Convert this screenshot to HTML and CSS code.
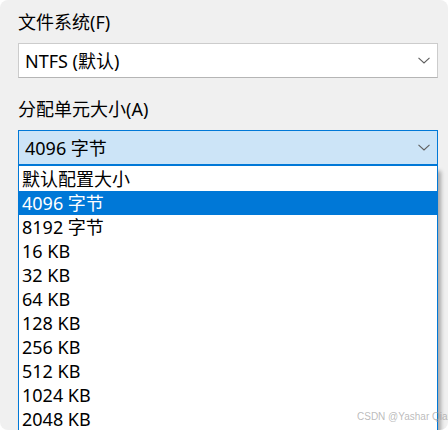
FILE: index.html
```html
<!DOCTYPE html>
<html lang="zh-CN">
<head>
<meta charset="utf-8">
<link rel="stylesheet" href="styles.css">
</head>
<body>
<div class="panel">
  <div class="label">文件系统(F)</div>
  <div class="combo">
    <span class="value">NTFS (默认)</span>
    <svg class="chev" width="12" height="7" viewBox="0 0 12 7"><polyline points="0.5,0.8 6,6 11.5,0.8" fill="none" stroke="#5f5f5f" stroke-width="1.1"/></svg>
  </div>
  <div class="label label2">分配单元大小(A)</div>
  <div class="combo-wrap">
    <div class="combo open">
      <span class="value">4096 字节</span>
      <svg class="chev" width="12" height="7" viewBox="0 0 12 7"><polyline points="0.5,0.8 6,6 11.5,0.8" fill="none" stroke="#5f5f5f" stroke-width="1.1"/></svg>
    </div>
    <ul class="list">
      <li>默认配置大小</li>
      <li class="sel">4096 字节</li>
      <li>8192 字节</li>
      <li>16 KB</li>
      <li>32 KB</li>
      <li>64 KB</li>
      <li>128 KB</li>
      <li>256 KB</li>
      <li>512 KB</li>
      <li>1024 KB</li>
      <li>2048 KB</li>
    </ul>
  </div>
  <div class="watermark">CSDN @Yashar Qian</div>
</div>
</body>
</html>
```
FILE: styles.css
```css
* { box-sizing: border-box; }
html, body { margin: 0; padding: 0; background: #ffffff; }
body {
  font-family: "Noto Sans", "Noto Sans CJK SC", sans-serif;
  font-size: 18px;
  color: #000;
}
.panel {
  position: relative;
  width: 448px;
  height: 430px;
  background: #f0f0f0;
  border-radius: 8px;
  overflow: hidden;
  padding: 10px 10px 0 18px;
}
.label {
  height: 24px;
  line-height: 24px;
  margin-bottom: 9px;
}
.label2 { margin-top: 19px; }
.combo {
  display: flex;
  align-items: center;
  justify-content: space-between;
  height: 35px;
  padding: 0 7px 0 6px;
  background: #fff;
  border: 1px solid #cccccc;
  border-bottom-color: #b5b5b5;
}
.combo .value { line-height: 24px; }
.chev { display: block; }
.combo-wrap { position: relative; }
.combo.open {
  height: 36px;
  background: #cce4f7;
  border: 1px solid #0078d7;
  border-bottom-width: 2px;
}
.list {
  position: absolute;
  left: 0;
  right: 0;
  top: 100%;
  height: 280px;
  margin: 0;
  padding: 1px 0 0 0;
  list-style: none;
  background: #fff;
  border: 1px solid #0078d7;
  border-top: none;
  box-shadow: 3px 5px 4px rgba(0, 0, 0, 0.3);
}
.list li {
  height: 24px;
  line-height: 24px;
  padding-left: 3px;
}
.list li.sel {
  background: #0078d7;
  color: #fff;
}
.watermark {
  position: absolute;
  z-index: 2;
  left: 357px;
  top: 411px;
  font-family: "Liberation Sans", sans-serif;
  font-size: 10px;
  color: rgba(150, 150, 150, 0.65);
  white-space: nowrap;
}
```
